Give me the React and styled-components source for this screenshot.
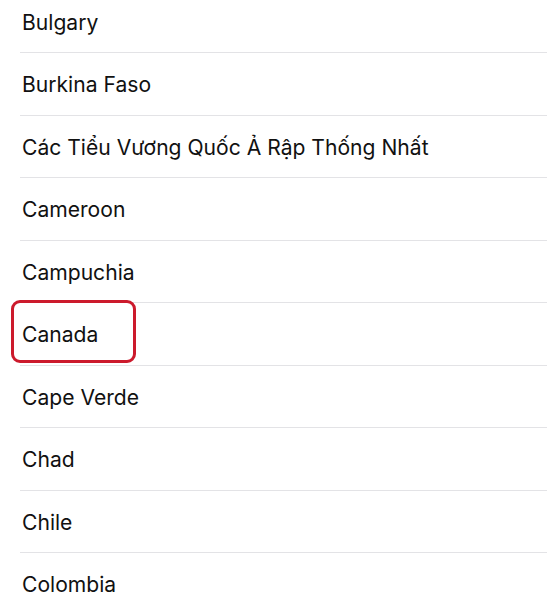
import React from "react";
import styled, { createGlobalStyle } from "styled-components";

const GlobalStyle = createGlobalStyle`
  html, body { margin: 0; padding: 0; background: #ffffff; }
  body { font-family: Inter, "Noto Sans", sans-serif; overflow: hidden; }
`;

const List = styled.ul`
  list-style: none;
  margin: -9.5px 0 0 0;
  padding: 0;
  width: 547px;
`;

const Row = styled.li`
  position: relative;
  height: 62.5px;
  box-sizing: border-box;
  margin-left: 20px;
  padding-left: 2px;
  padding-top: 2px;
  display: flex;
  align-items: center;
  border-bottom: 1.5px solid #e3e3e6;
  font-size: 21.1px;
  color: #111111;
`;

const Highlight = styled.span`
  position: absolute;
  left: -9px;
  top: -3px;
  width: 125px;
  height: 63px;
  box-sizing: border-box;
  border: 3px solid #cc1a2c;
  border-radius: 9px;
  pointer-events: none;
`;

const countries = [
  "Bulgary",
  "Burkina Faso",
  "Các Tiểu Vương Quốc Ả Rập Thống Nhất",
  "Cameroon",
  "Campuchia",
  "Canada",
  "Cape Verde",
  "Chad",
  "Chile",
  "Colombia",
];

export default function App() {
  return (
    <>
      <GlobalStyle />
      <List>
        {countries.map((c) => (
          <Row key={c}>
            {c}
            {c === "Canada" && <Highlight />}
          </Row>
        ))}
      </List>
    </>
  );
}
